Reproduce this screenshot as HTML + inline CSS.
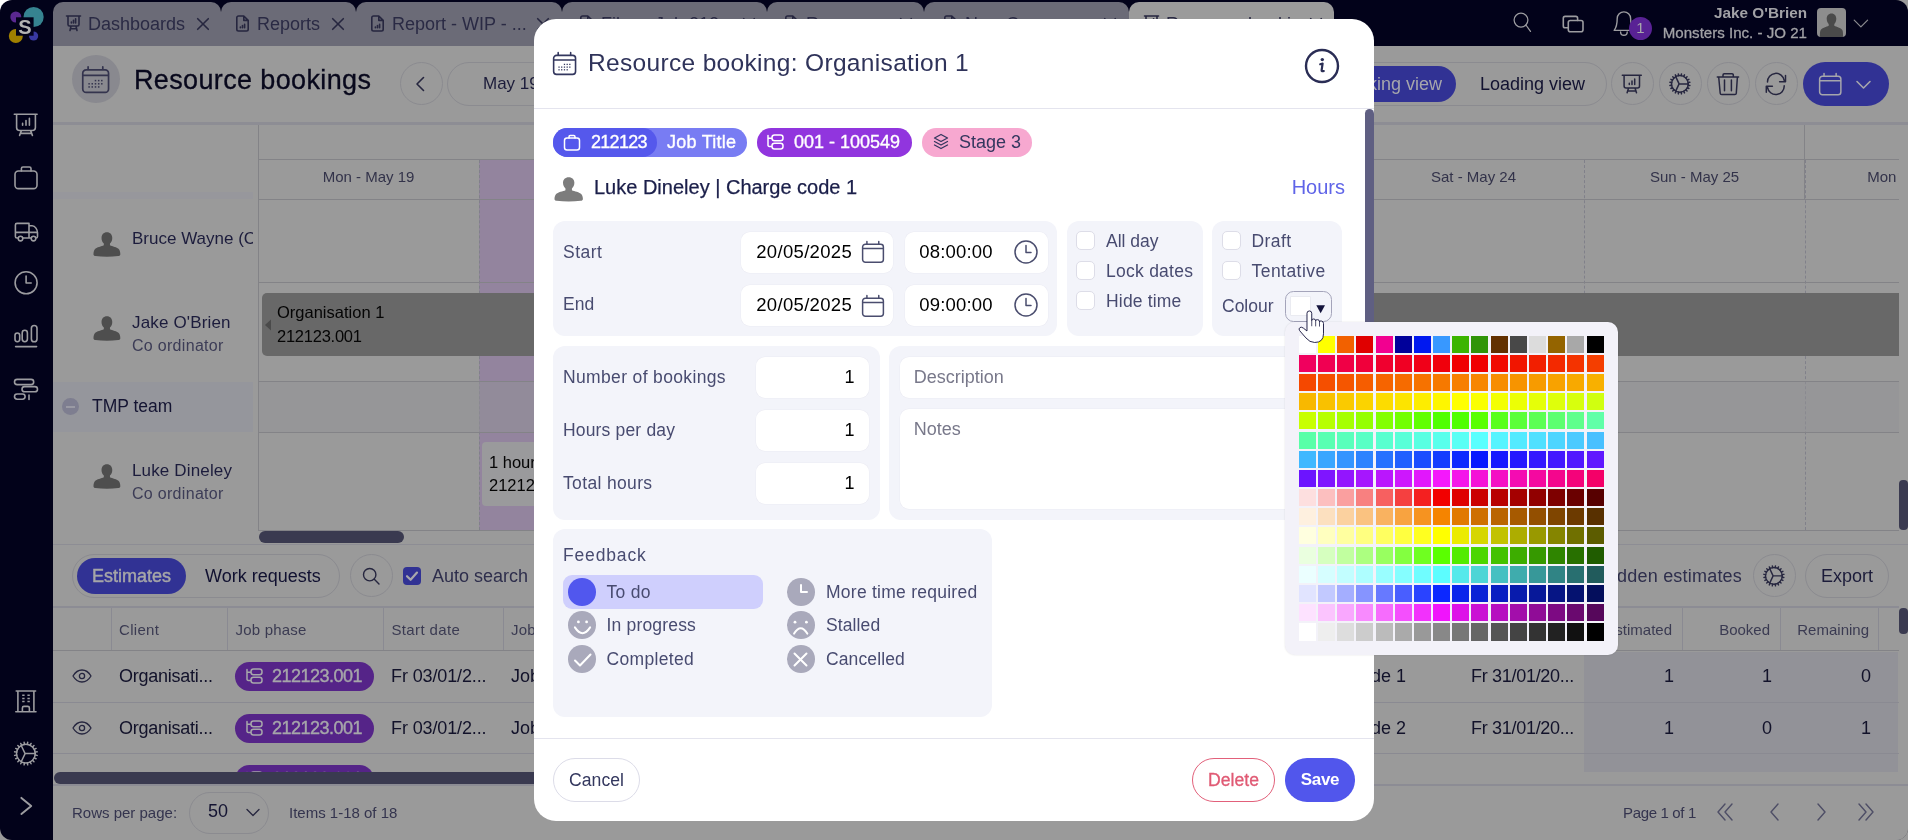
<!DOCTYPE html>
<html>
<head>
<meta charset="utf-8">
<title>Resource bookings</title>
<style>
*{box-sizing:border-box;margin:0;padding:0}
html,body{width:1908px;height:840px;overflow:hidden;background:#9a9a9a}
body{font-family:"Liberation Sans",sans-serif;position:relative;color:#0e0e24}
.abs{position:absolute}
.t{position:absolute;white-space:nowrap;line-height:20px;font-size:16px}
.r{text-align:right}
svg{position:absolute;overflow:visible}
.ic{fill:none;stroke:#9c9ca0;stroke-width:1.6;stroke-linecap:round;stroke-linejoin:round}
/* ---------- app shell ---------- */
#shell,#modal,#popup{will-change:transform}
#shell{position:absolute;left:0;top:0;width:1908px;height:840px;background:#02021a;border-radius:12px;overflow:hidden}
#content{position:absolute;left:53px;top:46px;width:1855px;height:794px;background:#9a9a9a}
.tab{position:absolute;top:2px;height:44px;background:#6b6b77;border-radius:10px 10px 0 0}
.tab.act{background:#9b9b9b}
.tab .t{top:12px;font-size:18px;color:#2a2a44;line-height:20px}
.cbtn{position:absolute;width:43px;height:43px;border-radius:50%;border:1px solid #8b8b90}
.pill{position:absolute;height:44px;border-radius:22px}
.d{stroke:#26263f}
/* ---------- scheduler ---------- */
.hl{position:absolute;height:1px;background:#838387}
.vl{position:absolute;width:1px;background:#838387}
.vd{position:absolute;width:0;border-left:1px dashed #80808a}
.day{position:absolute;top:167px;width:221px;text-align:center;font-size:15px;color:#33334a;line-height:20px;white-space:nowrap}
.nm{font-size:17px;color:#1c1c3c}
.sub{font-size:16px;color:#3c3c56}
/* ---------- table ---------- */
.th{font-size:15px;color:#3b3b52}
.td{font-size:18px;color:#12122a}
.tag{position:absolute;height:29.200px;border-radius:14.600px;background:#552488}
</style>
</head>
<body>
<div class="abs" style="left:0;top:0;width:12px;height:12px;background:#fff"></div>
<div id="shell">
<!-- SIDEBAR -->
<div id="sidebar" class="abs" style="left:0;top:0;width:53px;height:840px">
<svg width="53" height="50" style="left:0;top:0">
<circle cx="33.600" cy="17" r="10.100" fill="#368390"/>
<circle cx="15.800" cy="17" r="5.500" fill="#5a2890"/>
<circle cx="15.800" cy="36" r="7" fill="#a08000"/>
<circle cx="33.600" cy="36" r="4.600" fill="#3838a0"/>
<rect x="16" y="17.300" width="17.600" height="18.400" fill="#02021a"/>
<text x="24.800" y="33.600" text-anchor="middle" font-family="Liberation Sans" font-weight="bold" font-size="20" fill="#b4b4b4">S</text>
</svg>
<svg class="ic" width="53" height="840" style="left:0;top:0">
<path d="M14.300 114.300H37.100M16.600 114.300V127.500a3 3 0 0 0 3 3H32.400a3 3 0 0 0 3-3V114.300M21.400 130.600L19.600 135.400M30.600 130.600L32.400 135.400M20.300 133.400H31.700M22.600 123.400V125.200M26 120.600V125.200M29.400 118.200V125.200"/>
<rect x="15" y="171" width="22" height="17.600" rx="3.400"/>
<path d="M21.400 171V168.600a1.600 1.600 0 0 1 1.600-1.600H29.400a1.600 1.600 0 0 1 1.600 1.600V171"/>
<path d="M18.200 238H17a1.600 1.600 0 0 1-1.600-1.600V225a1.600 1.600 0 0 1 1.600-1.600H29V238M22.800 238H31.200M15.400 232.400H37.500M29 225.800H32.200C35.200 225.800 37.500 229.600 37.500 233V236.400a1.600 1.600 0 0 1-1.600 1.600H35.800"/>
<circle cx="20.500" cy="238.600" r="2.300"/><circle cx="33.500" cy="238.600" r="2.300"/>
<circle cx="26.100" cy="282.800" r="11"/><path d="M26.100 276V283H31.200"/>
<rect x="15" y="333" width="4.700" height="8.700" rx="2.350"/>
<rect x="22.200" y="330.300" width="5.200" height="11.400" rx="2.600"/>
<rect x="31.400" y="325.500" width="5.600" height="16.200" rx="2.800"/>
<path d="M15.600 346.600H36.600"/>
<rect x="14.500" y="379.400" width="19.200" height="5.200" rx="2.600"/>
<rect x="22" y="386.600" width="15.500" height="5.200" rx="2.600"/>
<rect x="14.500" y="394" width="10.600" height="5.200" rx="2.600"/>
<path d="M29 395V399.400"/>
<path d="M16.200 691H35.600M17.900 691V711.800M33.900 691V711.800M15.800 711.800H36M22.400 711.800V708a1.600 1.600 0 0 1 1.600-1.600H27.800a1.600 1.600 0 0 1 1.600 1.600V711.800"/>
<path d="M22.200 695.200H24.600M27.400 695.200H29.800M22.200 698.400H24.600M27.400 698.400H29.800M22.200 701.500H24.600M27.400 701.500H29.800" stroke-width="1.500" stroke-linecap="butt"/>
<g stroke-width="1.500"><circle cx="25.9" cy="753.6" r="9.4"/><path d="M35.18 755.07L37.16 755.38M34.28 757.87L36.06 758.78M32.55 760.25L33.96 761.66M30.17 761.98L31.08 763.76M27.37 762.88L27.68 764.86M24.43 762.88L24.12 764.86M21.63 761.98L20.72 763.76M19.25 760.25L17.84 761.66M17.52 757.87L15.74 758.78M16.62 755.07L14.64 755.38M16.62 752.13L14.64 751.82M17.52 749.33L15.74 748.42M19.25 746.95L17.84 745.54M21.63 745.22L20.72 743.44M24.43 744.32L24.12 742.34M27.37 744.32L27.68 742.34M30.17 745.22L31.08 743.44M32.55 746.95L33.96 745.54M34.28 749.33L36.06 748.42M35.18 752.13L37.16 751.82M25.099999999999998 753.6L35.30 753.60M25.099999999999998 753.6L21.20 761.74M25.099999999999998 753.6L21.20 745.46"/></g>
<path d="M21.400 797.900L31.200 805.900L21.400 813.900" stroke-width="2"/>
</svg>
</div>
<!-- TOPBAR -->
<div id="topbar" class="abs" style="left:53px;top:0;width:1855px;height:46px">
<div class="tab" style="left:0px;width:168px"><svg class="ic d" width="16" height="18" style="left:13px;top:12.5px" stroke-width="1.300"><path d="M0.500 1H14.500M2 1V9.500a1.500 1.500 0 0 0 1.500 1.500H11.500a1.500 1.500 0 0 0 1.500-1.500V1M5 11.200L4 15.500M10 11.200L11 15.500M4.600 13.800H10.400M5.400 7V8M7.500 5.200V8M9.600 3.800V8"/></svg><div class="t" style="left:35px">Dashboards</div><svg class="ic d" width="12" height="12" style="left:143.5px;top:15.600000000000001px" stroke-width="1.400"><path d="M0.700 0.700L11.300 11.300M11.300 0.700L0.700 11.300"/></svg></div>
<div class="tab" style="left:168px;width:135px"><svg class="ic d" width="14" height="18" style="left:15px;top:13px" stroke-width="1.400"><path d="M0.800 2.700a1.700 1.700 0 0 1 1.700-1.700H7.800L12.200 5.400V14.300a1.700 1.700 0 0 1-1.700 1.700H2.500a1.700 1.700 0 0 1-1.700-1.700ZM7.800 1V5.400H12.200M4.400 12V12.800M6.500 10.600V12.800M8.600 9.400V12.800"/></svg><div class="t" style="left:36px">Reports</div><svg class="ic d" width="12" height="12" style="left:110.5px;top:15.600000000000001px" stroke-width="1.400"><path d="M0.700 0.700L11.300 11.300M11.300 0.700L0.700 11.300"/></svg></div>
<div class="tab" style="left:303px;width:205.5px"><svg class="ic d" width="14" height="18" style="left:15px;top:13px" stroke-width="1.400"><path d="M0.800 2.700a1.700 1.700 0 0 1 1.700-1.700H7.800L12.200 5.400V14.300a1.700 1.700 0 0 1-1.700 1.700H2.500a1.700 1.700 0 0 1-1.700-1.700ZM7.800 1V5.400H12.200M4.400 12V12.800M6.500 10.600V12.800M8.600 9.400V12.800"/></svg><div class="t" style="left:36px">Report - WIP - ...</div><svg class="ic d" width="12" height="12" style="left:181.0px;top:15.600000000000001px" stroke-width="1.400"><path d="M0.700 0.700L11.300 11.300M11.300 0.700L0.700 11.300"/></svg></div>
<div class="tab" style="left:508.5px;width:205.5px"><svg class="ic d" width="14" height="18" style="left:18.5px;top:13px" stroke-width="1.400"><path d="M0.800 2.700a1.700 1.700 0 0 1 1.700-1.700H7.800L12.200 5.400V14.300a1.700 1.700 0 0 1-1.700 1.700H2.500a1.700 1.700 0 0 1-1.700-1.700ZM7.800 1V5.400H12.200M4.400 12V12.800M6.500 10.600V12.800M8.600 9.400V12.800"/></svg><div class="t" style="left:39.5px">Files - Job 212...</div><svg class="ic d" width="12" height="12" style="left:181.0px;top:15.600000000000001px" stroke-width="1.400"><path d="M0.700 0.700L11.300 11.300M11.300 0.700L0.700 11.300"/></svg></div>
<div class="tab" style="left:714px;width:157px"><svg class="ic d" width="14" height="18" style="left:18px;top:13px" stroke-width="1.400"><path d="M0.800 2.700a1.700 1.700 0 0 1 1.700-1.700H7.800L12.200 5.400V14.300a1.700 1.700 0 0 1-1.700 1.700H2.500a1.700 1.700 0 0 1-1.700-1.700ZM7.800 1V5.400H12.200M4.400 12V12.800M6.500 10.600V12.800M8.600 9.400V12.800"/></svg><div class="t" style="left:39px">Resource ...</div><svg class="ic d" width="12" height="12" style="left:132.5px;top:15.600000000000001px" stroke-width="1.400"><path d="M0.700 0.700L11.300 11.300M11.300 0.700L0.700 11.300"/></svg></div>
<div class="tab" style="left:871px;width:204.5px"><svg class="ic d" width="14" height="18" style="left:20px;top:13px" stroke-width="1.400"><path d="M0.800 2.700a1.700 1.700 0 0 1 1.700-1.700H7.800L12.200 5.400V14.300a1.700 1.700 0 0 1-1.700 1.700H2.500a1.700 1.700 0 0 1-1.700-1.700ZM7.800 1V5.400H12.200M4.400 12V12.800M6.500 10.600V12.800M8.600 9.400V12.800"/></svg><div class="t" style="left:41px">New Company ...</div><svg class="ic d" width="12" height="12" style="left:180.0px;top:15.600000000000001px" stroke-width="1.400"><path d="M0.700 0.700L11.300 11.300M11.300 0.700L0.700 11.300"/></svg></div>
<div class="tab act" style="left:1075.5px;width:205.5px"><svg class="ic d" width="16" height="18" style="left:15.5px;top:12.5px" stroke-width="1.300"><path d="M0.500 1H14.500M2 1V9.500a1.500 1.500 0 0 0 1.500 1.500H11.500a1.500 1.500 0 0 0 1.500-1.500V1M5 11.200L4 15.500M10 11.200L11 15.500M4.600 13.800H10.400M5.400 7V8M7.500 5.200V8M9.600 3.800V8"/></svg><div class="t" style="left:37.5px">Resource booki...</div><svg class="ic d" width="12" height="12" style="left:181.0px;top:15.600000000000001px" stroke-width="1.400"><path d="M0.700 0.700L11.300 11.300M11.300 0.700L0.700 11.300"/></svg></div>
<svg class="ic" width="400" height="46" style="left:1440px;top:0">
<g stroke-width="1.250"><circle cx="28" cy="20.100" r="6.900"/><path d="M32.900 25L37.500 31.400"/></g>
<path d="M75.300 27.700H72.100a1.800 1.800 0 0 1-1.800-1.800V18.200a1.800 1.800 0 0 1 1.800-1.800H82.800a1.800 1.800 0 0 1 1.800 1.800V20.500"/><rect x="75.300" y="20.500" width="14.700" height="11.200" rx="2"/>
<path d="M121.200 30.400C123 28 124.200 26 124.200 18.600a6.700 6.700 0 0 1 13.400 0C137.600 26 138.800 28 140.600 30.400ZM127.600 32a3.300 3.300 0 0 0 6.600 0" stroke-width="1.400"/>
<path d="M361.200 20.200L367.900 26.900L374.600 20.200" stroke-width="1.200" stroke="#8c8c90"/>
</svg>
<div class="abs" style="left:1575.800px;top:16.600px;width:23.400px;height:23.400px;border-radius:50%;background:#592295"></div>
<div class="t" style="left:1575.800px;top:18.300px;width:23.400px;text-align:center;font-size:15px;color:#a8a8ac">1</div>
<div class="t r" style="left:1500px;top:3px;width:254px;font-size:15.300px;font-weight:bold;color:#a2a2a6">Jake O'Brien</div>
<div class="t r" style="left:1500px;top:23px;width:254px;font-size:15.100px;color:#a2a2a6;-webkit-text-stroke:.3px #a2a2a6">Monsters Inc. - JO 21</div>
<div class="abs" style="left:1764px;top:8px;width:29px;height:29px;border-radius:4px;background:#8d8d8d;overflow:hidden">
<svg width="29" height="29" style="left:0;top:0"><path d="M14.500 5.500c3 0 4.800 2.300 4.800 5.200 0 2.200-.8 4.200-2 5.400v1.600c2 1 6.600 2 8 4.200 .6 1 .8 2.600 .8 7.100H2.900c0-4.500 .2-6.100 .8-7.100 1.400-2.200 6-3.200 8-4.200v-1.600c-1.200-1.200-2-3.200-2-5.400 0-2.900 1.800-5.200 4.800-5.200z" fill="#4a4a4a"/></svg>
</div>
</div>
<!-- CONTENT -->
<div id="content">
<div class="abs" style="left:19.099999999999994px;top:8.899999999999999px;width:48px;height:48px;border-radius:50%;background:#89898f"></div>
<svg width="27.30" height="27.10" viewBox="0 0 27.300 27.100" style="left:29.15px;top:19.80px;fill:none;stroke:#34344e;stroke-width:1.70;stroke-linecap:round;stroke-linejoin:round"><path d="M0.750 7.350a3.400 3.400 0 0 1 3.400-3.400H23.150a3.400 3.400 0 0 1 3.400 3.400V22.950a3.400 3.400 0 0 1-3.400 3.400H4.150a3.400 3.400 0 0 1-3.400-3.400ZM0.750 9.450H26.550M6.100 0.750V3.900M20.800 0.750V3.900"/><rect x="12.75" y="13.85" width="1.500" height="1.500" fill="#34344e" stroke="none"/><rect x="15.95" y="13.85" width="1.500" height="1.500" fill="#34344e" stroke="none"/><rect x="19.05" y="13.85" width="1.500" height="1.500" fill="#34344e" stroke="none"/><rect x="6.35" y="17.05" width="1.500" height="1.500" fill="#34344e" stroke="none"/><rect x="9.50" y="17.05" width="1.500" height="1.500" fill="#34344e" stroke="none"/><rect x="12.75" y="17.05" width="1.500" height="1.500" fill="#34344e" stroke="none"/><rect x="15.95" y="17.05" width="1.500" height="1.500" fill="#34344e" stroke="none"/><rect x="19.05" y="17.05" width="1.500" height="1.500" fill="#34344e" stroke="none"/><rect x="6.35" y="20.20" width="1.500" height="1.500" fill="#34344e" stroke="none"/><rect x="9.50" y="20.20" width="1.500" height="1.500" fill="#34344e" stroke="none"/><rect x="12.75" y="20.20" width="1.500" height="1.500" fill="#34344e" stroke="none"/><rect x="15.95" y="20.20" width="1.500" height="1.500" fill="#34344e" stroke="none"/></svg>
<div class="t" style="left:81px;top:16px;font-size:27px;line-height:34px;color:#08081c;letter-spacing:0.36px;-webkit-text-stroke:.3px #08081c;margin-top:.7px">Resource bookings</div>
<div class="cbtn" style="left:347px;top:16px"></div>
<svg class="ic d" width="20" height="20" style="left:358px;top:28px"><path d="M12.500 3.500L6 10L12.500 16.500"/></svg>
<div class="pill" style="left:394px;top:16px;width:300px;border:1px solid #8b8b90"></div>
<div class="t" style="left:430px;top:28px;font-size:17px;color:#1c1c3a">May 19</div>
<div class="pill" style="left:1197px;top:16px;width:357px;border:1px solid #8b8b90"></div>
<div class="abs" style="left:1247px;top:20px;width:156px;height:36px;border-radius:18px;background:#313294"></div>
<div class="t r" style="left:1247px;top:28px;width:142px;font-size:18px;color:#a6a6ac">Booking view</div>
<div class="t" style="left:1427px;top:28px;font-size:18px;color:#121230">Loading view</div>
<div class="cbtn" style="left:1557.5px;top:16px"></div>
<div class="cbtn" style="left:1605.5px;top:16px"></div>
<div class="cbtn" style="left:1653.5px;top:16px"></div>
<div class="cbtn" style="left:1701.5px;top:16px"></div>
<svg class="ic d" width="1855" height="60" style="left:0;top:10px;stroke-width:1.500"><g transform="translate(1567.300,16.800)"><path d="M2 2.500H21M3.800 2.500V13.200a2 2 0 0 0 2 2H17.200a2 2 0 0 0 2-2V2.500M8.200 15.400L6.800 20M14.800 15.400L16.200 20M7.300 18.200H15.700M9 10.500V11.800M11.700 8.300V11.800M14.400 6.300V11.800"/></g><g><circle cx="1626.9" cy="27.9" r="8.4"/><path d="M1635.20 29.21L1636.88 29.48M1634.38 31.71L1635.90 32.49M1632.84 33.84L1634.04 35.04M1630.71 35.38L1631.49 36.90M1628.21 36.20L1628.48 37.88M1625.59 36.20L1625.32 37.88M1623.09 35.38L1622.31 36.90M1620.96 33.84L1619.76 35.04M1619.42 31.71L1617.90 32.49M1618.60 29.21L1616.92 29.48M1618.60 26.59L1616.92 26.32M1619.42 24.09L1617.90 23.31M1620.96 21.96L1619.76 20.76M1623.09 20.42L1622.31 18.90M1625.59 19.60L1625.32 17.92M1628.21 19.60L1628.48 17.92M1630.71 20.42L1631.49 18.90M1632.84 21.96L1634.04 20.76M1634.38 24.09L1635.90 23.31M1635.20 26.59L1636.88 26.32M1626.1000000000001 27.9L1635.30 27.90M1626.1000000000001 27.9L1622.70 35.17M1626.1000000000001 27.9L1622.70 20.63"/></g><path d="M1664.300 20.900H1685.600M1670 20.900V18.900a1.200 1.200 0 0 1 1.200-1.200H1679.100a1.200 1.200 0 0 1 1.200 1.200V20.900M1665.700 21L1667.200 37.200a1.500 1.500 0 0 0 1.500 1.400H1681.800a1.500 1.500 0 0 0 1.500-1.400L1684.400 21M1671.500 24.100V34.800M1678.400 24.100V34.800"/><path d="M1714.500 26A8.400 8.400 0 0 1 1731.200 24.500M1732.500 19.600V25.700H1726.600M1731.200 29.800A8.400 8.400 0 0 1 1714.500 31.400M1713.300 36.300V30.200H1719.400"/></svg>
<div class="pill" style="left:1750px;top:16px;width:86px;background:#313294"></div>
<svg width="22.50" height="22.34" viewBox="0 0 27.300 27.100" style="left:1765.75px;top:26.83px;fill:none;stroke:#a6a6ac;stroke-width:1.82;stroke-linecap:round;stroke-linejoin:round"><path d="M0.750 7.350a3.400 3.400 0 0 1 3.400-3.400H23.150a3.400 3.400 0 0 1 3.400 3.400V22.950a3.400 3.400 0 0 1-3.400 3.400H4.150a3.400 3.400 0 0 1-3.400-3.400ZM0.750 9.450H26.550M6.100 0.750V3.900M20.800 0.750V3.900"/></svg>
<svg class="ic" width="16" height="10" style="left:1803px;top:34px;stroke:#a6a6ac"><path d="M1 1.500L7.500 8L14 1.500"/></svg>
<div class="abs" style="left:0;top:76px;width:1855px;height:3px;background:#8d8d94"></div>
<div class="abs" style="left:426px;top:114px;width:221px;height:370px;background:#93849e"></div>
<div class="hl" style="left:205px;top:113px;width:1641px"></div>
<div class="hl" style="left:205px;top:153px;width:1641px"></div>
<div class="abs" style="left:0px;top:146px;width:200px;height:7px;background:#97979c"></div>
<div class="vl" style="left:205px;top:79px;height:405px"></div>
<div class="vl" style="left:1751px;top:79px;height:74px"></div>
<div class="vd" style="left:426px;top:114px;height:370px"></div>
<div class="vd" style="left:647px;top:114px;height:370px"></div>
<div class="vd" style="left:868px;top:114px;height:370px"></div>
<div class="vd" style="left:1089px;top:114px;height:370px"></div>
<div class="vd" style="left:1310px;top:114px;height:370px"></div>
<div class="vd" style="left:1531px;top:114px;height:370px"></div>
<div class="vd" style="left:1752px;top:114px;height:370px"></div>
<div class="day" style="left:205px;top:121px">Mon - May 19</div>
<div class="day" style="left:426px;top:121px">Tue - May 20</div>
<div class="day" style="left:647px;top:121px">Wed - May 21</div>
<div class="day" style="left:868px;top:121px">Thu - May 22</div>
<div class="day" style="left:1089px;top:121px">Fri - May 23</div>
<div class="day" style="left:1310px;top:121px">Sat - May 24</div>
<div class="day" style="left:1531px;top:121px">Sun - May 25</div>
<div class="day" style="left:1749.5px;top:121px">Mon - May 26</div>
<div class="hl" style="left:205px;top:236px;width:1641px"></div>
<div class="hl" style="left:205px;top:335px;width:1641px"></div>
<div class="hl" style="left:205px;top:386px;width:1641px"></div>
<div class="hl" style="left:205px;top:484px;width:1641px"></div>
<div class="abs" style="left:0px;top:336px;width:200px;height:50px;background:#95969c"></div>
<div class="abs" style="left:206px;top:336px;width:1640px;height:50px;background:rgba(146,146,150,.5)"></div>
<svg width="27.8" height="26.2" viewBox="0 0 30 30" preserveAspectRatio="none" style="left:39.6px;top:185.4px"><path d="M15 1.500c3.600 0 5.800 2.800 5.800 6.400 0 2.700-1 5.100-2.500 6.500v1.900c2.300 1.200 7.900 2.200 9.700 4.700 1 1.400 1.500 3.500 1.500 5.500 0 1.300-1 2-2.200 2.200-3.800 .6-8 .8-12.300 .8s-8.500-.2-12.300-.8c-1.200-.2-2.200-.9-2.200-2.200 0-2 .5-4.100 1.500-5.500 1.800-2.500 7.400-3.500 9.700-4.700v-1.900c-1.500-1.400-2.500-3.800-2.500-6.500 0-3.600 2.200-6.400 5.800-6.400z" fill="#4e4e4e"/></svg>
<div class="t nm" style="left:79px;top:183px;width:121px;overflow:hidden">Bruce Wayne (C</div>
<svg width="27.8" height="26.2" viewBox="0 0 30 30" preserveAspectRatio="none" style="left:39.6px;top:269.4px"><path d="M15 1.500c3.600 0 5.800 2.800 5.800 6.400 0 2.700-1 5.100-2.500 6.500v1.900c2.300 1.200 7.900 2.200 9.700 4.700 1 1.400 1.500 3.500 1.500 5.500 0 1.300-1 2-2.200 2.200-3.800 .6-8 .8-12.300 .8s-8.500-.2-12.300-.8c-1.200-.2-2.200-.9-2.200-2.200 0-2 .5-4.100 1.500-5.500 1.800-2.500 7.400-3.500 9.700-4.700v-1.900c-1.500-1.400-2.500-3.800-2.500-6.500 0-3.600 2.200-6.400 5.800-6.400z" fill="#4e4e4e"/></svg>
<div class="t nm" style="left:79px;top:267px;letter-spacing:.16px">Jake O'Brien</div>
<div class="t sub" style="left:79px;top:290px;letter-spacing:.3px">Co ordinator</div>
<div class="abs" style="left:9px;top:352px;width:17px;height:17px;border-radius:50%;background:#7e7e90"></div>
<div class="abs" style="left:13px;top:360px;width:9px;height:1.500px;background:#9a9aa4"></div>
<div class="t" style="left:39px;top:350px;font-size:17.500px;color:#141432">TMP team</div>
<svg width="27.8" height="26.2" viewBox="0 0 30 30" preserveAspectRatio="none" style="left:39.6px;top:417.4px"><path d="M15 1.500c3.600 0 5.800 2.800 5.800 6.400 0 2.700-1 5.100-2.500 6.500v1.900c2.300 1.200 7.900 2.200 9.700 4.700 1 1.400 1.500 3.500 1.500 5.500 0 1.300-1 2-2.200 2.200-3.800 .6-8 .8-12.300 .8s-8.500-.2-12.300-.8c-1.200-.2-2.200-.9-2.200-2.200 0-2 .5-4.100 1.500-5.500 1.800-2.500 7.400-3.500 9.700-4.700v-1.900c-1.500-1.400-2.500-3.800-2.500-6.500 0-3.600 2.200-6.400 5.800-6.400z" fill="#4e4e4e"/></svg>
<div class="t nm" style="left:79px;top:415px;letter-spacing:.15px">Luke Dineley</div>
<div class="t sub" style="left:79px;top:438.3px;letter-spacing:.3px">Co ordinator</div>
<div class="abs" style="left:209px;top:247px;width:1637px;height:63px;background:#686868;border-radius:5px 0 0 5px"></div>
<svg width="8" height="12" style="left:211px;top:273px"><path d="M7 0.500V11.500L1 6Z" fill="#4a4a4a"/></svg>
<div class="t" style="left:224px;top:256px;font-size:16.500px;color:#050505">Organisation 1</div>
<div class="t" style="left:224px;top:280px;font-size:16.500px;color:#050505;letter-spacing:-.25px">212123.001</div>
<div class="abs" style="left:429px;top:396px;width:200px;height:64px;background:#9a9a9c;border-radius:4px"></div>
<div class="t" style="left:436px;top:406px;font-size:16.500px;color:#050505">1 hour</div>
<div class="t" style="left:436px;top:429px;font-size:16.500px;color:#050505">212123</div>
<div class="abs" style="left:206px;top:485px;width:145px;height:12px;border-radius:6px;background:#3a3a50"></div>
<div class="abs" style="left:1845.5px;top:79px;width:10px;height:419px;background:#9a9a9a"></div>
<div class="abs" style="left:1846px;top:434px;width:9px;height:50px;border-radius:4px;background:#3a3a50"></div>
<div class="hl" style="left:0;top:498px;width:1855px;background:#8d8d94"></div>
<div class="pill" style="left:19.299999999999997px;top:508.20000000000005px;width:268px;height:43.600px;border:1px solid #8b8b90"></div>
<div class="abs" style="left:23.799999999999997px;top:511.9px;width:109.200px;height:35.800px;border-radius:18px;background:#313294"></div>
<div class="t" style="left:24px;top:520px;width:109px;text-align:center;font-size:18px;color:#a6a6a8;-webkit-text-stroke:0.450px #a6a6a8">Estimates</div>
<div class="t" style="left:152px;top:520px;font-size:18px;color:#101030">Work requests</div>
<div class="cbtn" style="left:297px;top:508px"></div>
<svg class="ic d" width="20" height="20" style="left:308px;top:520px;stroke-width:1.400"><circle cx="8.700" cy="8.700" r="6.200"/><path d="M13.300 13.300L18 18"/></svg>
<div class="abs" style="left:350px;top:521px;width:18px;height:18px;border-radius:4px;background:#313294"></div>
<svg class="ic" width="18" height="18" style="left:350px;top:521px;stroke:#a8a8ac;stroke-width:2.200"><path d="M4 9.200L7.600 12.800L14 5.600"/></svg>
<div class="t" style="left:379px;top:520px;font-size:18px;color:#2e2e4c">Auto search</div>
<div class="t r" style="left:1389px;top:520px;width:300px;font-size:18px;color:#2e2e4c;letter-spacing:.2px">Hidden estimates</div>
<div class="cbtn" style="left:1699.5px;top:508px"></div>
<svg class="ic d" width="1855" height="60" style="left:0;top:500px;stroke-width:1.400"><g><circle cx="1720.9" cy="29.9" r="8.4"/><path d="M1729.20 31.21L1730.88 31.48M1728.38 33.71L1729.90 34.49M1726.84 35.84L1728.04 37.04M1724.71 37.38L1725.49 38.90M1722.21 38.20L1722.48 39.88M1719.59 38.20L1719.32 39.88M1717.09 37.38L1716.31 38.90M1714.96 35.84L1713.76 37.04M1713.42 33.71L1711.90 34.49M1712.60 31.21L1710.92 31.48M1712.60 28.59L1710.92 28.32M1713.42 26.09L1711.90 25.31M1714.96 23.96L1713.76 22.76M1717.09 22.42L1716.31 20.90M1719.59 21.60L1719.32 19.92M1722.21 21.60L1722.48 19.92M1724.71 22.42L1725.49 20.90M1726.84 23.96L1728.04 22.76M1728.38 26.09L1729.90 25.31M1729.20 28.59L1730.88 28.32M1720.1000000000001 29.9L1729.30 29.90M1720.1000000000001 29.9L1716.70 37.17M1720.1000000000001 29.9L1716.70 22.63"/></g></svg>
<div class="pill" style="left:1752px;top:508px;width:84px;border:1px solid #8b8b90"></div>
<div class="t" style="left:1752px;top:520px;width:84px;text-align:center;font-size:18px;color:#1c1c3a">Export</div>
<div class="abs" style="left:0;top:560px;width:1846px;height:2px;background:#8c8c94"></div>
<div class="hl" style="left:0;top:604px;width:1846px"></div>
<div class="abs" style="left:1531px;top:606px;width:314px;height:119.500px;background:#929298"></div>
<div class="vl" style="left:58px;top:562px;height:42px;background:#8a8a92"></div>
<div class="vl" style="left:174px;top:562px;height:42px;background:#8a8a92"></div>
<div class="vl" style="left:330px;top:562px;height:42px;background:#8a8a92"></div>
<div class="vl" style="left:450px;top:562px;height:42px;background:#8a8a92"></div>
<div class="vl" style="left:1629px;top:562px;height:42px;background:#8a8a92"></div>
<div class="vl" style="left:1727px;top:562px;height:42px;background:#8a8a92"></div>
<div class="vl" style="left:1825px;top:562px;height:42px;background:#8a8a92"></div>
<div class="t th" style="left:66px;top:574px;letter-spacing:0.3px">Client</div>
<div class="t th" style="left:182.5px;top:574px;letter-spacing:0.2px">Job phase</div>
<div class="t th" style="left:338.4px;top:574px;letter-spacing:0.38px">Start date</div>
<div class="t th" style="left:458px;top:574px;letter-spacing:0.2px">Job</div>
<div class="t th r" style="left:1499px;top:574px;width:120px">Estimated</div>
<div class="t th r" style="left:1597px;top:574px;width:120px">Booked</div>
<div class="t th r" style="left:1696px;top:574px;width:120px">Remaining</div>
<svg class="ic d" width="20" height="14" style="left:19px;top:623px;stroke-width:1.300"><path d="M1 7C3.500 2.800 6.800 1 10 1s6.500 1.800 9 6c-2.500 4.200-5.800 6-9 6S3.500 11.200 1 7Z"/><circle cx="10" cy="7" r="2.600"/></svg>
<div class="t td" style="left:66px;top:620px;letter-spacing:-.25px">Organisati...</div>
<div class="tag" style="left:181.8px;top:615.9px;width:139.400px"></div>
<svg class="ic" width="18" height="16" style="left:193px;top:622px;stroke:#a6a6aa;stroke-width:1.500"><path d="M1 1.500V11.200a1.200 1.200 0 0 0 1.200 1.200H4.500M1 4.200H4.500"/><rect x="5" y="1" width="11" height="5.800" rx="2.500"/><rect x="5" y="9.200" width="11" height="5.800" rx="2.500"/></svg>
<div class="t" style="left:219px;top:620px;font-size:18px;color:#a6a6aa;-webkit-text-stroke:0.400px #a6a6aa;letter-spacing:-.5px">212123.001</div>
<div class="t td" style="left:338px;top:620px;letter-spacing:-.12px">Fr 03/01/2...</div>
<div class="t td" style="left:458px;top:620px">Job</div>
<div class="t td" style="left:1318px;top:620px">de 1</div>
<div class="t td" style="left:1418px;top:620px;letter-spacing:-.3px">Fr 31/01/20...</div>
<div class="t td r" style="left:1561px;top:620px;width:60px">1</div>
<div class="t td r" style="left:1659px;top:620px;width:60px">1</div>
<div class="t td r" style="left:1758px;top:620px;width:60px">0</div>
<svg class="ic d" width="20" height="14" style="left:19px;top:674.6px;stroke-width:1.300"><path d="M1 7C3.500 2.800 6.800 1 10 1s6.500 1.800 9 6c-2.500 4.200-5.800 6-9 6S3.500 11.200 1 7Z"/><circle cx="10" cy="7" r="2.600"/></svg>
<div class="t td" style="left:66px;top:671.6px;letter-spacing:-.25px">Organisati...</div>
<div class="tag" style="left:181.8px;top:667.5px;width:139.400px"></div>
<svg class="ic" width="18" height="16" style="left:193px;top:673.6px;stroke:#a6a6aa;stroke-width:1.500"><path d="M1 1.500V11.200a1.200 1.200 0 0 0 1.200 1.200H4.500M1 4.200H4.500"/><rect x="5" y="1" width="11" height="5.800" rx="2.500"/><rect x="5" y="9.200" width="11" height="5.800" rx="2.500"/></svg>
<div class="t" style="left:219px;top:671.6px;font-size:18px;color:#a6a6aa;-webkit-text-stroke:0.400px #a6a6aa;letter-spacing:-.5px">212123.001</div>
<div class="t td" style="left:338px;top:671.6px;letter-spacing:-.12px">Fr 03/01/2...</div>
<div class="t td" style="left:458px;top:671.6px">Job</div>
<div class="t td" style="left:1318px;top:671.6px">de 2</div>
<div class="t td" style="left:1418px;top:671.6px;letter-spacing:-.3px">Fr 31/01/20...</div>
<div class="t td r" style="left:1561px;top:671.6px;width:60px">1</div>
<div class="t td r" style="left:1659px;top:671.6px;width:60px">0</div>
<div class="t td r" style="left:1758px;top:671.6px;width:60px">1</div>
<svg class="ic d" width="20" height="14" style="left:19px;top:726px;stroke-width:1.300"><path d="M1 7C3.500 2.800 6.800 1 10 1s6.500 1.800 9 6c-2.500 4.200-5.800 6-9 6S3.500 11.200 1 7Z"/><circle cx="10" cy="7" r="2.600"/></svg>
<div class="t td" style="left:66px;top:723px;letter-spacing:-.25px">Organisati...</div>
<div class="tag" style="left:181.8px;top:718.9px;width:139.400px"></div>
<svg class="ic" width="18" height="16" style="left:193px;top:725px;stroke:#a6a6aa;stroke-width:1.500"><path d="M1 1.500V11.200a1.200 1.200 0 0 0 1.200 1.200H4.500M1 4.200H4.500"/><rect x="5" y="1" width="11" height="5.800" rx="2.500"/><rect x="5" y="9.200" width="11" height="5.800" rx="2.500"/></svg>
<div class="t" style="left:219px;top:723px;font-size:18px;color:#a6a6aa;-webkit-text-stroke:0.400px #a6a6aa;letter-spacing:-.5px">212123.001</div>
<div class="t td" style="left:338px;top:723px;letter-spacing:-.12px">Fr 03/01/2...</div>
<div class="t td" style="left:458px;top:723px">Job</div>
<div class="t td" style="left:1318px;top:723px">de 3</div>
<div class="t td" style="left:1418px;top:723px;letter-spacing:-.3px">Fr 31/01/20...</div>
<div class="t td r" style="left:1561px;top:723px;width:60px">1</div>
<div class="t td r" style="left:1659px;top:723px;width:60px">1</div>
<div class="t td r" style="left:1758px;top:723px;width:60px">1</div>
<div class="hl" style="left:0;top:656px;width:1846px;background:#8a8a92"></div>
<div class="hl" style="left:0;top:707px;width:1846px;background:#8a8a92"></div>
<div class="abs" style="left:0;top:725.5px;width:1855px;height:69px;background:#9a9a9a"></div>
<div class="abs" style="left:1px;top:726.3px;width:1280px;height:11.800px;border-radius:6px;background:#3a3a50"></div>
<div class="abs" style="left:0;top:738px;width:1855px;height:2px;background:#8c8c94"></div>
<div class="abs" style="left:1846px;top:562px;width:9px;height:26px;border-radius:4px;background:#3a3a50"></div>
<div class="t" style="left:19px;top:757px;font-size:15px;color:#34344e">Rows per page:</div>
<div class="abs" style="left:136px;top:746px;width:80px;height:42px;border-radius:21px;border:1px solid #8b8b90"></div>
<div class="t" style="left:155px;top:755px;font-size:18px;color:#141432">50</div>
<svg class="ic d" width="14" height="9" style="left:193px;top:762px;stroke-width:1.300"><path d="M1 1.500L7 7.500L13 1.500"/></svg>
<div class="t" style="left:236px;top:757px;font-size:15px;color:#34344e">Items 1-18 of 18</div>
<div class="t" style="left:1570px;top:757px;font-size:15px;color:#34344e;letter-spacing:-.35px">Page 1 of 1</div>
<svg class="ic" width="180" height="20" style="left:1662px;top:756px;stroke:#4e4e66;stroke-width:1.400"><path d="M10 2L3 10L10 18M17 2L10 10L17 18M63 2L56 10L63 18M103 2L110 10L103 18M144 2L151 10L144 18M151 2L158 10L151 18"/></svg>
</div>
</div>
<!-- MODAL -->
<div id="modal">
<style>
#modal{position:absolute;left:534px;top:19px;width:840px;height:802px;background:#fff;border-radius:22px;overflow:hidden}
#modal .t{color:#484b70;font-size:17.500px}
.pn{position:absolute;background:#f3f4fa;border-radius:12px}
.inp{position:absolute;background:#fff;border-radius:9px;box-shadow:0 0 0 .5px #ebebf3;height:41.600px}
.inp .t{top:10.200px}
#modal .v{color:#000;font-size:18px}
#modal .ph{color:#78788a;font-size:18px}
.cb{position:absolute;width:19px;height:19px;background:#fff;border:1px solid #dddde8;border-radius:5px}
.fb{position:absolute;width:27.600px;height:27.600px;border-radius:50%;background:#a9a9bb}
.mi{fill:none;stroke:#4a4d6e;stroke-width:1.500;stroke-linecap:round;stroke-linejoin:round}
.chip{position:absolute;top:109.300px;height:28.300px;border-radius:14.200px}
#modal .chip .t{top:3.700px;font-size:18px;color:#fff;-webkit-text-stroke:0.350px #fff}
</style>
<svg width="23.20" height="23.03" viewBox="0 0 27.300 27.100" style="left:19.40px;top:32.63px;fill:none;stroke:#33375e;stroke-width:1.88;stroke-linecap:round;stroke-linejoin:round"><path d="M0.750 7.350a3.400 3.400 0 0 1 3.400-3.400H23.150a3.400 3.400 0 0 1 3.400 3.400V22.950a3.400 3.400 0 0 1-3.400 3.400H4.150a3.400 3.400 0 0 1-3.400-3.400ZM0.750 9.450H26.550M6.100 0.750V3.900M20.800 0.750V3.900"/><rect x="12.75" y="13.85" width="1.500" height="1.500" fill="#33375e" stroke="none"/><rect x="15.95" y="13.85" width="1.500" height="1.500" fill="#33375e" stroke="none"/><rect x="19.05" y="13.85" width="1.500" height="1.500" fill="#33375e" stroke="none"/><rect x="6.35" y="17.05" width="1.500" height="1.500" fill="#33375e" stroke="none"/><rect x="9.50" y="17.05" width="1.500" height="1.500" fill="#33375e" stroke="none"/><rect x="12.75" y="17.05" width="1.500" height="1.500" fill="#33375e" stroke="none"/><rect x="15.95" y="17.05" width="1.500" height="1.500" fill="#33375e" stroke="none"/><rect x="19.05" y="17.05" width="1.500" height="1.500" fill="#33375e" stroke="none"/><rect x="6.35" y="20.20" width="1.500" height="1.500" fill="#33375e" stroke="none"/><rect x="9.50" y="20.20" width="1.500" height="1.500" fill="#33375e" stroke="none"/><rect x="12.75" y="20.20" width="1.500" height="1.500" fill="#33375e" stroke="none"/><rect x="15.95" y="20.20" width="1.500" height="1.500" fill="#33375e" stroke="none"/></svg>
<div class="t" style="left:54px;top:27px;font-size:24.500px;line-height:34px;color:#2f335a;letter-spacing:.33px">Resource booking: Organisation 1</div>
<svg width="40" height="40" style="left:768px;top:27px"><circle cx="20" cy="20" r="16" fill="none" stroke="#2a2d55" stroke-width="2.400"/><circle cx="20.300" cy="13.600" r="1.700" fill="#2a2d55"/><path d="M18.200 18.200L20.600 17.600L19.600 24.400Q19.500 25.600 21.800 25" fill="none" stroke="#2a2d55" stroke-width="2.200" stroke-linecap="round" stroke-linejoin="round"/></svg>
<div class="abs" style="left:0;top:89px;width:840px;height:1px;background:#e4e4ee"></div>
<div class="abs" style="left:831px;top:90px;width:9px;height:420px;border-radius:5px 5px 5px 5px;background:#5f5f82"></div>
<div class="chip" style="left:19px;width:194px;background:#787cf3"></div>
<div class="chip" style="left:19px;width:104px;background:#5558ec"><svg class="mi" width="20" height="18" style="left:10px;top:5.400px;stroke:#fff;stroke-width:1.500"><rect x="1.500" y="4" width="15" height="12" rx="2.500"/><path d="M6 4V2.800a1.200 1.200 0 0 1 1.200-1.200H10.800a1.200 1.200 0 0 1 1.200 1.200V4"/></svg><div class="t" style="left:38px;letter-spacing:-.7px">212123</div></div>
<div class="chip" style="left:123px;width:90px;background:transparent"><div class="t" style="left:10px;letter-spacing:.25px">Job Title</div></div>
<div class="chip" style="left:223px;width:155px;background:#9135de"><svg class="mi" width="18" height="16" style="left:10px;top:6.200px;stroke:#fff;stroke-width:1.500"><path d="M1 1.500V11.200a1.200 1.200 0 0 0 1.200 1.200H4.500M1 4.200H4.500"/><rect x="5" y="1" width="11" height="5.800" rx="2.500"/><rect x="5" y="9.200" width="11" height="5.800" rx="2.500"/></svg><div class="t" style="left:37px">001 - 100549</div></div>
<div class="chip" style="left:388px;width:110px;background:#f7a8d0"><svg class="mi" width="18" height="18" style="left:10px;top:5.200px;stroke:#33375e;stroke-width:1.300"><path d="M9 1.500L15.500 5L9 8.500L2.500 5ZM2.500 8.500L9 12L15.500 8.500M2.500 12L9 15.500L15.500 12"/></svg><div class="t" style="left:37px;color:#33375e;-webkit-text-stroke:0">Stage 3</div></div>
<svg width="29.400" height="26" viewBox="0 0 30 30" preserveAspectRatio="none" style="left:19.9px;top:156.7px"><path d="M15 1.500c3.600 0 5.800 2.800 5.800 6.400 0 2.700-1 5.100-2.500 6.500v1.900c2.300 1.200 7.900 2.200 9.700 4.700 1 1.400 1.500 3.500 1.500 5.500 0 1.300-1 2-2.200 2.200-3.800 .6-8 .8-12.300 .8s-8.500-.2-12.300-.8c-1.200-.2-2.200-.9-2.200-2.200 0-2 .5-4.100 1.500-5.500 1.800-2.500 7.400-3.500 9.700-4.700v-1.900c-1.500-1.400-2.500-3.800-2.500-6.500 0-3.600 2.200-6.400 5.800-6.400z" fill="#7c7c7c"/></svg>
<div class="t" style="left:60px;top:156.3px;font-size:20px;line-height:24px;color:#1b1f4a;-webkit-text-stroke:0.250px #1b1f4a">Luke Dineley | Charge code 1</div>
<div class="t r" style="left:711px;top:155.5px;width:100px;font-size:20px;line-height:24px;color:#5f64e8">Hours</div>
<div class="pn" style="left:19px;top:202.3px;width:503.600px;height:114.600px"></div>
<div class="t" style="left:29px;top:223px;letter-spacing:.5px">Start</div>
<div class="t" style="left:29px;top:275px">End</div>
<div class="inp" style="left:206.8px;top:212.5px;width:152.300px"><div class="t v" style="left:15.400px;font-size:18.500px;letter-spacing:.33px">20/05/2025</div><svg width="22.00" height="21.84" viewBox="0 0 27.300 27.100" style="left:121.30px;top:9.88px;fill:none;stroke:#4a4d6e;stroke-width:1.86;stroke-linecap:round;stroke-linejoin:round"><path d="M0.750 7.350a3.400 3.400 0 0 1 3.400-3.400H23.150a3.400 3.400 0 0 1 3.400 3.400V22.950a3.400 3.400 0 0 1-3.400 3.400H4.150a3.400 3.400 0 0 1-3.400-3.400ZM0.750 9.450H26.550M6.100 0.750V3.900M20.800 0.750V3.900"/></svg></div>
<div class="inp" style="left:370.7px;top:212.5px;width:143px"><div class="t v" style="left:14.500px;font-size:18.500px;letter-spacing:.2px">08:00:00</div><svg class="mi" width="26" height="26" style="left:108.3px;top:7px"><circle cx="13" cy="13" r="11"/><path d="M13 6.500V13.500H18"/></svg></div>
<div class="inp" style="left:206.8px;top:265.7px;width:152.300px"><div class="t v" style="left:15.400px;font-size:18.500px;letter-spacing:.33px">20/05/2025</div><svg width="22.00" height="21.84" viewBox="0 0 27.300 27.100" style="left:121.30px;top:9.88px;fill:none;stroke:#4a4d6e;stroke-width:1.86;stroke-linecap:round;stroke-linejoin:round"><path d="M0.750 7.350a3.400 3.400 0 0 1 3.400-3.400H23.150a3.400 3.400 0 0 1 3.400 3.400V22.950a3.400 3.400 0 0 1-3.400 3.400H4.150a3.400 3.400 0 0 1-3.400-3.400ZM0.750 9.450H26.550M6.100 0.750V3.900M20.800 0.750V3.900"/></svg></div>
<div class="inp" style="left:370.7px;top:265.7px;width:143px"><div class="t v" style="left:14.500px;font-size:18.500px;letter-spacing:.2px">09:00:00</div><svg class="mi" width="26" height="26" style="left:108.3px;top:7px"><circle cx="13" cy="13" r="11"/><path d="M13 6.500V13.500H18"/></svg></div>
<div class="pn" style="left:533px;top:202.3px;width:135.800px;height:114.600px"></div>
<div class="cb" style="left:542px;top:212px"></div><div class="t" style="left:572px;top:212px;letter-spacing:0px">All day</div>
<div class="cb" style="left:542px;top:242px"></div><div class="t" style="left:572px;top:242px;letter-spacing:0.26px">Lock dates</div>
<div class="cb" style="left:542px;top:272px"></div><div class="t" style="left:572px;top:272px;letter-spacing:0.18px">Hide time</div>
<div class="pn" style="left:678px;top:202.3px;width:129.700px;height:114.600px"></div>
<div class="cb" style="left:688px;top:212px"></div><div class="t" style="left:717.5px;top:212px;letter-spacing:0.4px">Draft</div>
<div class="cb" style="left:688px;top:242px"></div><div class="t" style="left:717.5px;top:242px;letter-spacing:0.46px">Tentative</div>
<div class="t" style="left:688px;top:277px">Colour</div>
<div class="abs" style="left:751.2px;top:272px;width:46.800px;height:30.600px;border:1px solid #a4a4ba;border-radius:8.500px;background:#f3f4fa"></div>
<div class="abs" style="left:757.3px;top:278.4px;width:18.300px;height:18px;background:#fff;box-shadow:0 0 0 .6px #e4e4ec"></div>
<svg width="10" height="9" style="left:782px;top:285.8px"><path d="M0.300 0.300H9L4.650 8.200Z" fill="#14143c"/></svg>
<div class="pn" style="left:19px;top:327.3px;width:326.700px;height:173.400px"></div>
<div class="t" style="left:29px;top:348px;letter-spacing:0.35px">Number of bookings</div>
<div class="inp" style="left:221.6px;top:337.7px;width:113.400px"><div class="t v r" style="left:0;width:99px">1</div></div>
<div class="t" style="left:29px;top:401px;letter-spacing:0.17px">Hours per day</div>
<div class="inp" style="left:221.6px;top:390.7px;width:113.400px"><div class="t v r" style="left:0;width:99px">1</div></div>
<div class="t" style="left:29px;top:454px;letter-spacing:0.35px">Total hours</div>
<div class="inp" style="left:221.6px;top:443.7px;width:113.400px"><div class="t v r" style="left:0;width:99px">1</div></div>
<div class="pn" style="left:355.2px;top:327.3px;width:452.500px;height:173.400px"></div>
<div class="inp" style="left:365.7px;top:337.7px;width:432px"><div class="t ph" style="left:14px">Description</div></div>
<div class="inp" style="left:365.7px;top:390px;width:432px;height:100px"><div class="t ph" style="left:14px">Notes</div></div>
<div class="pn" style="left:19px;top:510.3px;width:439px;height:187.600px"></div>
<div class="t" style="left:29px;top:526px;letter-spacing:.85px">Feedback</div>
<div class="abs" style="left:29px;top:556px;width:200px;height:34px;border-radius:9px;background:#cfcffd"></div>
<div class="fb" style="left:34.2px;top:559.2px;background:#5157ee"></div>
<div class="t" style="left:72.5px;top:563px;letter-spacing:0.3px">To do</div>
<div class="fb" style="left:34.2px;top:592.2px"></div>
<div class="t" style="left:72.5px;top:596px;letter-spacing:0.18px">In progress</div>
<div class="fb" style="left:34.2px;top:626.2px"></div>
<div class="t" style="left:72.5px;top:630px;letter-spacing:0.33px">Completed</div>
<div class="fb" style="left:253.1px;top:559.2px"></div>
<div class="t" style="left:292px;top:563px;letter-spacing:0.25px">More time required</div>
<div class="fb" style="left:253.1px;top:592.2px"></div>
<div class="t" style="left:292px;top:596px;letter-spacing:0.1px">Stalled</div>
<div class="fb" style="left:253.1px;top:626.2px"></div>
<div class="t" style="left:292px;top:630px;letter-spacing:0.12px">Cancelled</div>
<svg width="27" height="27" style="left:34.5px;top:592.5px"><circle cx="9.400" cy="9.900" r="1.400" fill="#fff"/><circle cx="17.600" cy="9.900" r="1.400" fill="#fff"/><path d="M5.900 15.400Q13.500 27 21.100 15.400" fill="none" stroke="#fff" stroke-width="2" stroke-linecap="round" stroke-linejoin="round"/></svg>
<svg width="27" height="27" style="left:34.5px;top:626.5px"><path d="M6 14.500L11 19.500L21.500 8.500" fill="none" stroke="#fff" stroke-width="2" stroke-linecap="round" stroke-linejoin="round"/></svg>
<svg width="27" height="27" style="left:253.4px;top:559.5px"><path d="M14 6V13H20" fill="none" stroke="#fff" stroke-width="2" stroke-linecap="round" stroke-linejoin="round" stroke-width="1.800"/></svg>
<svg width="27" height="27" style="left:253.4px;top:592.5px"><circle cx="8" cy="10.200" r="1.400" fill="#fff"/><circle cx="19.400" cy="10.200" r="1.400" fill="#fff"/><path d="M7.100 21.600Q13.700 10.800 20.300 21.600" fill="none" stroke="#fff" stroke-width="2" stroke-linecap="round" stroke-linejoin="round"/></svg>
<svg width="27" height="27" style="left:253.4px;top:626.5px"><path d="M7.500 7.500L19.500 19.500M19.500 7.500L7.500 19.500" fill="none" stroke="#fff" stroke-width="2" stroke-linecap="round" stroke-linejoin="round"/></svg>
<div class="abs" style="left:0;top:719px;width:840px;height:1px;background:#e4e4ee"></div>
<div class="abs" style="left:19px;top:739px;width:87px;height:44px;border-radius:22px;border:1px solid #dcdce8"></div>
<div class="t" style="left:19px;top:751px;width:87px;text-align:center;font-size:17.600px;color:#33375e">Cancel</div>
<div class="abs" style="left:658px;top:739px;width:83px;height:44px;border-radius:22px;border:1.500px solid #e2607a"></div>
<div class="t" style="left:658px;top:751px;width:83px;text-align:center;font-size:17.600px;color:#e05a74;-webkit-text-stroke:0.300px #e05a74">Delete</div>
<div class="abs" style="left:751px;top:739px;width:70px;height:44px;border-radius:22px;background:#5156ec"></div>
<div class="t" style="left:751px;top:751px;width:70px;text-align:center;font-size:17px;color:#fff;font-weight:bold;letter-spacing:-.3px">Save</div>
</div>
<!-- POPUP -->
<div id="popup">
<style>#popup{position:absolute;left:1285px;top:322px;width:333px;height:332.700px;background:#f3f2f9;border-radius:10px;box-shadow:0 0 2px rgba(0,0,0,.12)}#popup i{position:absolute;width:17px;height:17px;display:block}</style><i style="left:14px;top:14px;background:#ffffff"></i><i style="left:33px;top:14px;background:#ffff00"></i><i style="left:52px;top:14px;background:#f26100"></i><i style="left:71px;top:14px;background:#e00000"></i><i style="left:91px;top:14px;background:#f20090"></i><i style="left:110px;top:14px;background:#00009a"></i><i style="left:129px;top:14px;background:#0018f0"></i><i style="left:148px;top:14px;background:#3898ff"></i><i style="left:167px;top:14px;background:#3cb400"></i><i style="left:186px;top:14px;background:#309408"></i><i style="left:206px;top:14px;background:#623000"></i><i style="left:225px;top:14px;background:#484848"></i><i style="left:244px;top:14px;background:#dcdcdc"></i><i style="left:263px;top:14px;background:#946400"></i><i style="left:282px;top:14px;background:#a8a8a8"></i><i style="left:302px;top:14px;background:#000000"></i><i style="left:14px;top:33px;background:#f0005e"></i><i style="left:33px;top:33px;background:#f00052"></i><i style="left:52px;top:33px;background:#f00046"></i><i style="left:71px;top:33px;background:#f0003b"></i><i style="left:91px;top:33px;background:#f0002f"></i><i style="left:110px;top:33px;background:#f00023"></i><i style="left:129px;top:33px;background:#f00018"></i><i style="left:148px;top:33px;background:#f0000c"></i><i style="left:167px;top:33px;background:#f00000"></i><i style="left:186px;top:33px;background:#f00000"></i><i style="left:206px;top:33px;background:#f10a00"></i><i style="left:225px;top:33px;background:#f11500"></i><i style="left:244px;top:33px;background:#f21f00"></i><i style="left:263px;top:33px;background:#f32900"></i><i style="left:282px;top:33px;background:#f43300"></i><i style="left:302px;top:33px;background:#f43e00"></i><i style="left:14px;top:52px;background:#f54800"></i><i style="left:33px;top:52px;background:#f54f00"></i><i style="left:52px;top:52px;background:#f55600"></i><i style="left:71px;top:52px;background:#f65d00"></i><i style="left:91px;top:52px;background:#f66400"></i><i style="left:110px;top:52px;background:#f66b00"></i><i style="left:129px;top:52px;background:#f67200"></i><i style="left:148px;top:52px;background:#f67900"></i><i style="left:167px;top:52px;background:#f77f00"></i><i style="left:186px;top:52px;background:#f78600"></i><i style="left:206px;top:52px;background:#f78d00"></i><i style="left:225px;top:52px;background:#f79400"></i><i style="left:244px;top:52px;background:#f79b00"></i><i style="left:263px;top:52px;background:#f8a200"></i><i style="left:282px;top:52px;background:#f8a900"></i><i style="left:302px;top:52px;background:#f8b000"></i><i style="left:14px;top:71px;background:#f8b800"></i><i style="left:33px;top:71px;background:#f9c100"></i><i style="left:52px;top:71px;background:#faca00"></i><i style="left:71px;top:71px;background:#fbd300"></i><i style="left:91px;top:71px;background:#fcdc00"></i><i style="left:110px;top:71px;background:#fce400"></i><i style="left:129px;top:71px;background:#fded00"></i><i style="left:148px;top:71px;background:#fef600"></i><i style="left:167px;top:71px;background:#ffff00"></i><i style="left:186px;top:71px;background:#faff00"></i><i style="left:206px;top:71px;background:#f3ff03"></i><i style="left:225px;top:71px;background:#ecff05"></i><i style="left:244px;top:71px;background:#e5ff08"></i><i style="left:263px;top:71px;background:#deff0b"></i><i style="left:282px;top:71px;background:#d7ff0d"></i><i style="left:302px;top:71px;background:#d0ff10"></i><i style="left:14px;top:90px;background:#c8ff00"></i><i style="left:33px;top:90px;background:#b7ff00"></i><i style="left:52px;top:90px;background:#a6ff00"></i><i style="left:71px;top:90px;background:#95ff00"></i><i style="left:91px;top:90px;background:#83ff00"></i><i style="left:110px;top:90px;background:#72ff00"></i><i style="left:129px;top:90px;background:#61ff00"></i><i style="left:148px;top:90px;background:#50ff00"></i><i style="left:167px;top:90px;background:#50ff00"></i><i style="left:186px;top:90px;background:#58ff00"></i><i style="left:206px;top:90px;background:#59ff1c"></i><i style="left:225px;top:90px;background:#5bff38"></i><i style="left:244px;top:90px;background:#5cff54"></i><i style="left:263px;top:90px;background:#5dff70"></i><i style="left:282px;top:90px;background:#5fff8c"></i><i style="left:302px;top:90px;background:#60ffa8"></i><i style="left:14px;top:110px;background:#58ffa8"></i><i style="left:33px;top:110px;background:#58ffb2"></i><i style="left:52px;top:110px;background:#58ffbb"></i><i style="left:71px;top:110px;background:#58ffc5"></i><i style="left:91px;top:110px;background:#58ffcf"></i><i style="left:110px;top:110px;background:#58ffd8"></i><i style="left:129px;top:110px;background:#58ffe2"></i><i style="left:148px;top:110px;background:#58ffec"></i><i style="left:167px;top:110px;background:#58fff5"></i><i style="left:186px;top:110px;background:#58ffff"></i><i style="left:206px;top:110px;background:#55f4ff"></i><i style="left:225px;top:110px;background:#53eaff"></i><i style="left:244px;top:110px;background:#50e0ff"></i><i style="left:263px;top:110px;background:#4dd5ff"></i><i style="left:282px;top:110px;background:#4bcaff"></i><i style="left:302px;top:110px;background:#48c0ff"></i><i style="left:14px;top:129px;background:#40b8ff"></i><i style="left:33px;top:129px;background:#3aa6ff"></i><i style="left:52px;top:129px;background:#3494ff"></i><i style="left:71px;top:129px;background:#2d83ff"></i><i style="left:91px;top:129px;background:#2771ff"></i><i style="left:110px;top:129px;background:#215fff"></i><i style="left:129px;top:129px;background:#1b4dff"></i><i style="left:148px;top:129px;background:#143cff"></i><i style="left:167px;top:129px;background:#0e2aff"></i><i style="left:186px;top:129px;background:#0818ff"></i><i style="left:206px;top:129px;background:#1718ff"></i><i style="left:225px;top:129px;background:#2518ff"></i><i style="left:244px;top:129px;background:#3418ff"></i><i style="left:263px;top:129px;background:#4318ff"></i><i style="left:282px;top:129px;background:#5118ff"></i><i style="left:302px;top:129px;background:#6018ff"></i><i style="left:14px;top:148px;background:#6c14ff"></i><i style="left:33px;top:148px;background:#7f15ff"></i><i style="left:52px;top:148px;background:#9315fe"></i><i style="left:71px;top:148px;background:#a616fe"></i><i style="left:91px;top:148px;background:#ba16fd"></i><i style="left:110px;top:148px;background:#cd17fd"></i><i style="left:129px;top:148px;background:#e117fc"></i><i style="left:148px;top:148px;background:#f418fc"></i><i style="left:167px;top:148px;background:#f415ea"></i><i style="left:186px;top:148px;background:#f412d7"></i><i style="left:206px;top:148px;background:#f40fc4"></i><i style="left:225px;top:148px;background:#f40cb2"></i><i style="left:244px;top:148px;background:#f409a0"></i><i style="left:263px;top:148px;background:#f4068d"></i><i style="left:282px;top:148px;background:#f4037a"></i><i style="left:302px;top:148px;background:#f40068"></i><i style="left:14px;top:167px;background:#fddfdf"></i><i style="left:33px;top:167px;background:#fcbfbf"></i><i style="left:52px;top:167px;background:#fa9f9f"></i><i style="left:71px;top:167px;background:#f88080"></i><i style="left:91px;top:167px;background:#f76060"></i><i style="left:110px;top:167px;background:#f54040"></i><i style="left:129px;top:167px;background:#f42020"></i><i style="left:148px;top:167px;background:#f20000"></i><i style="left:167px;top:167px;background:#df0000"></i><i style="left:186px;top:167px;background:#cb0000"></i><i style="left:206px;top:167px;background:#b80000"></i><i style="left:225px;top:167px;background:#a50000"></i><i style="left:244px;top:167px;background:#910000"></i><i style="left:263px;top:167px;background:#7e0000"></i><i style="left:282px;top:167px;background:#6a0000"></i><i style="left:302px;top:167px;background:#570000"></i><i style="left:14px;top:186px;background:#fef0df"></i><i style="left:33px;top:186px;background:#fce0bf"></i><i style="left:52px;top:186px;background:#fbd19f"></i><i style="left:71px;top:186px;background:#fac280"></i><i style="left:91px;top:186px;background:#f9b260"></i><i style="left:110px;top:186px;background:#f8a340"></i><i style="left:129px;top:186px;background:#f69320"></i><i style="left:148px;top:186px;background:#f58400"></i><i style="left:167px;top:186px;background:#e17900"></i><i style="left:186px;top:186px;background:#ce6f00"></i><i style="left:206px;top:186px;background:#ba6400"></i><i style="left:225px;top:186px;background:#a75a00"></i><i style="left:244px;top:186px;background:#934f00"></i><i style="left:263px;top:186px;background:#7f4500"></i><i style="left:282px;top:186px;background:#6c3a00"></i><i style="left:302px;top:186px;background:#583000"></i><i style="left:14px;top:205px;background:#ffffdf"></i><i style="left:33px;top:205px;background:#ffffbf"></i><i style="left:52px;top:205px;background:#ffff9f"></i><i style="left:71px;top:205px;background:#ffff80"></i><i style="left:91px;top:205px;background:#ffff60"></i><i style="left:110px;top:205px;background:#ffff40"></i><i style="left:129px;top:205px;background:#ffff20"></i><i style="left:148px;top:205px;background:#ffff00"></i><i style="left:167px;top:205px;background:#ebeb00"></i><i style="left:186px;top:205px;background:#d6d600"></i><i style="left:206px;top:205px;background:#c2c200"></i><i style="left:225px;top:205px;background:#adad00"></i><i style="left:244px;top:205px;background:#999900"></i><i style="left:263px;top:205px;background:#858500"></i><i style="left:282px;top:205px;background:#707000"></i><i style="left:302px;top:205px;background:#5c5c00"></i><i style="left:14px;top:225px;background:#eaffdf"></i><i style="left:33px;top:225px;background:#d6ffbf"></i><i style="left:52px;top:225px;background:#c1ff9f"></i><i style="left:71px;top:225px;background:#acff80"></i><i style="left:91px;top:225px;background:#98ff60"></i><i style="left:110px;top:225px;background:#83ff40"></i><i style="left:129px;top:225px;background:#6fff20"></i><i style="left:148px;top:225px;background:#5aff00"></i><i style="left:167px;top:225px;background:#53eb00"></i><i style="left:186px;top:225px;background:#4cd600"></i><i style="left:206px;top:225px;background:#44c200"></i><i style="left:225px;top:225px;background:#3dad00"></i><i style="left:244px;top:225px;background:#369900"></i><i style="left:263px;top:225px;background:#2f8500"></i><i style="left:282px;top:225px;background:#287000"></i><i style="left:302px;top:225px;background:#205c00"></i><i style="left:14px;top:244px;background:#ebffff"></i><i style="left:33px;top:244px;background:#d6feff"></i><i style="left:52px;top:244px;background:#c2feff"></i><i style="left:71px;top:244px;background:#aefeff"></i><i style="left:91px;top:244px;background:#99feff"></i><i style="left:110px;top:244px;background:#85feff"></i><i style="left:129px;top:244px;background:#70fdff"></i><i style="left:148px;top:244px;background:#5cfdff"></i><i style="left:167px;top:244px;background:#55e9eb"></i><i style="left:186px;top:244px;background:#4dd5d6"></i><i style="left:206px;top:244px;background:#46c0c2"></i><i style="left:225px;top:244px;background:#3facad"></i><i style="left:244px;top:244px;background:#379899"></i><i style="left:263px;top:244px;background:#308485"></i><i style="left:282px;top:244px;background:#286f70"></i><i style="left:302px;top:244px;background:#215b5c"></i><i style="left:14px;top:263px;background:#e1e4ff"></i><i style="left:33px;top:263px;background:#c2c9ff"></i><i style="left:52px;top:263px;background:#a4aeff"></i><i style="left:71px;top:263px;background:#8694ff"></i><i style="left:91px;top:263px;background:#6779ff"></i><i style="left:110px;top:263px;background:#495eff"></i><i style="left:129px;top:263px;background:#2a43ff"></i><i style="left:148px;top:263px;background:#0c28ff"></i><i style="left:167px;top:263px;background:#0b25eb"></i><i style="left:186px;top:263px;background:#0a22d6"></i><i style="left:206px;top:263px;background:#091ec2"></i><i style="left:225px;top:263px;background:#081bad"></i><i style="left:244px;top:263px;background:#071899"></i><i style="left:263px;top:263px;background:#061585"></i><i style="left:282px;top:263px;background:#051270"></i><i style="left:302px;top:263px;background:#040e5c"></i><i style="left:14px;top:282px;background:#fde2ff"></i><i style="left:33px;top:282px;background:#fbc4fe"></i><i style="left:52px;top:282px;background:#f9a7fe"></i><i style="left:71px;top:282px;background:#f88afe"></i><i style="left:91px;top:282px;background:#f66cfd"></i><i style="left:110px;top:282px;background:#f44ffd"></i><i style="left:129px;top:282px;background:#f231fc"></i><i style="left:148px;top:282px;background:#f014fc"></i><i style="left:167px;top:282px;background:#dd12e8"></i><i style="left:186px;top:282px;background:#ca11d4"></i><i style="left:206px;top:282px;background:#b60fc0"></i><i style="left:225px;top:282px;background:#a30eab"></i><i style="left:244px;top:282px;background:#900c97"></i><i style="left:263px;top:282px;background:#7d0a83"></i><i style="left:282px;top:282px;background:#6a096f"></i><i style="left:302px;top:282px;background:#56075b"></i><i style="left:14px;top:301px;background:#ffffff;height:17.600px"></i><i style="left:33px;top:301px;background:#eeeeee;height:17.600px"></i><i style="left:52px;top:301px;background:#dddddd;height:17.600px"></i><i style="left:71px;top:301px;background:#cccccc;height:17.600px"></i><i style="left:91px;top:301px;background:#bbbbbb;height:17.600px"></i><i style="left:110px;top:301px;background:#aaaaaa;height:17.600px"></i><i style="left:129px;top:301px;background:#999999;height:17.600px"></i><i style="left:148px;top:301px;background:#888888;height:17.600px"></i><i style="left:167px;top:301px;background:#777777;height:17.600px"></i><i style="left:186px;top:301px;background:#666666;height:17.600px"></i><i style="left:206px;top:301px;background:#555555;height:17.600px"></i><i style="left:225px;top:301px;background:#444444;height:17.600px"></i><i style="left:244px;top:301px;background:#333333;height:17.600px"></i><i style="left:263px;top:301px;background:#222222;height:17.600px"></i><i style="left:282px;top:301px;background:#111111;height:17.600px"></i><i style="left:302px;top:301px;background:#000000;height:17.600px"></i>
</div>
<svg width="26.670" height="33.330" viewBox="220 300 320 400" style="left:1298.330px;top:310px"><path d="M328 548L328 340A28.500 28.500 0 0 1 385 340L385 425Q385 408 408 408Q432 408 432 428Q432 416 455 416Q478 416 478 440Q478 430 500 432Q526 436 526 462L526 585Q526 690 420 690Q360 690 315 635L240 548Q222 525 245 510Q262 500 285 518L328 552Z" fill="#fff" stroke="#14143c" stroke-width="11" stroke-linejoin="round"/><path d="M385 425V490M432 428V492M478 440V494" stroke="#14143c" stroke-width="9" fill="none" stroke-linecap="round"/></svg>
</body>
</html>
